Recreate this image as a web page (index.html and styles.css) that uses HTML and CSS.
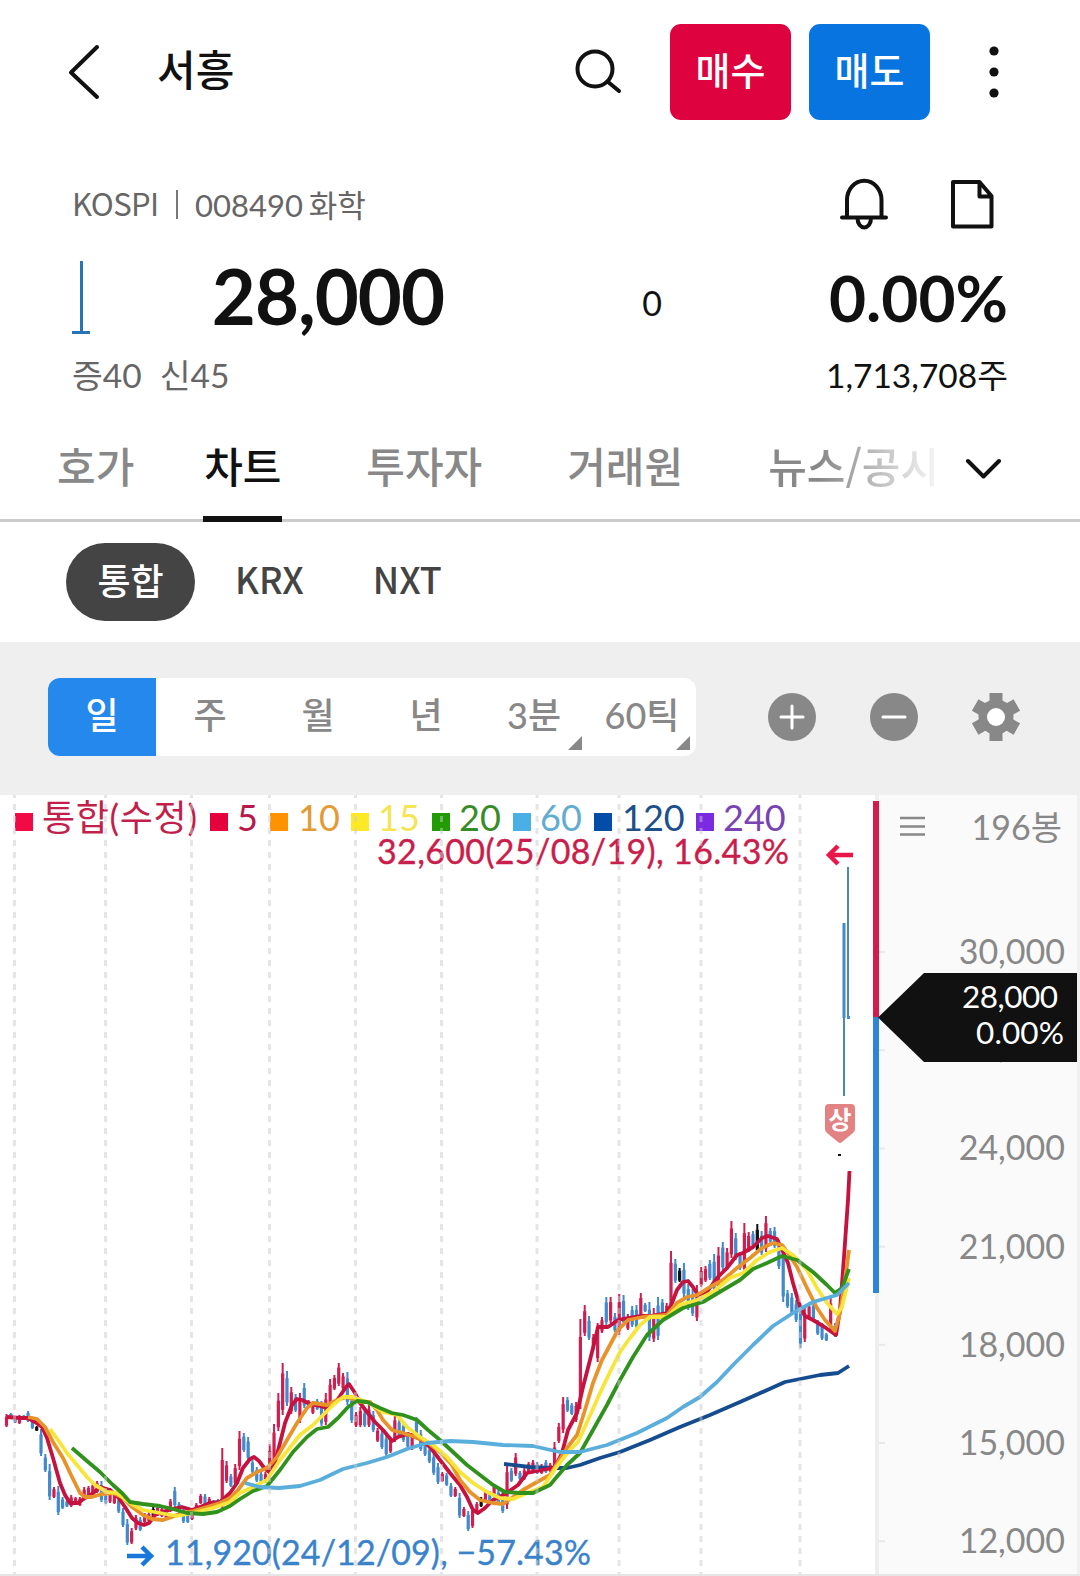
FILE: index.html
```html
<!DOCTYPE html>
<html lang="ko">
<head>
  <meta charset="UTF-8" />
  <meta name="viewport" content="width=device-width, initial-scale=1.0"/>
  <title>서흥</title>
  <link rel="stylesheet" href="styles.css">
</head>
<body>
  <header class="topbar">
    <svg class="back" width="32" height="56" viewBox="0 0 32 56"><path d="M29 3 3 28.500 29 53"/></svg>
    <h1>서흥</h1>
    <svg class="search" width="48" height="48" viewBox="0 0 48 48"><circle cx="20" cy="21" r="17.500"/><path d="M32.500 33.500 44 43"/></svg>
    <button class="trade buy">매수</button>
    <button class="trade sell">매도</button>
    <svg class="more" width="10" height="56" viewBox="0 0 10 56"><circle cx="5" cy="7" r="4.600"/><circle cx="5" cy="28" r="4.600"/><circle cx="5" cy="49" r="4.600"/></svg>
  </header>

  <section class="info">
    <div class="meta">
      <span class="market">KOSPI</span>
      <span class="sep"></span>
      <span class="code">008490 화학</span>
      <svg class="bell" width="50" height="52" viewBox="0 0 50 52"><path d="M3 39.500H47M8 39V22a17 19 0 0 1 34.500 0V39M18.500 40c0 12.500 13.500 12.500 13.500 0"/></svg>
      <svg class="doc" width="46" height="52" viewBox="0 0 46 52"><path d="M3 4H29.500L41.500 18V48.500H3ZM29.500 4V18.500H41.500"/></svg>
    </div>
    <div class="quote">
      <svg class="mini" width="20" height="76" viewBox="0 0 20 76"><path d="M9.500 1V73M0 72.500H18"/></svg>
      <span class="price">28,000</span>
      <span class="diff">0</span>
      <span class="percent">0.00%</span>
    </div>
    <div class="sub">
      <span class="margin">증40</span>
      <span class="credit">신45</span>
      <span class="volume">1,713,708주</span>
    </div>
  </section>

  <nav class="tabs">
    <a class="tab">호가</a>
    <a class="tab active">차트</a>
    <a class="tab">투자자</a>
    <a class="tab">거래원</a>
    <a class="tab fade">뉴스/공시</a>
    <svg class="expand" width="36" height="24" viewBox="0 0 36 24"><path d="M3 3 18.500 18.500 34 3"/></svg>
  </nav>

  <div class="exchanges">
    <span class="pill">통합</span>
    <span class="krx">KRX</span>
    <span class="nxt">NXT</span>
  </div>

  <div class="toolbar">
    <div class="periods">
      <span class="period on">일</span>
      <span class="period">주</span>
      <span class="period">월</span>
      <span class="period">년</span>
      <span class="period menu">3분</span>
      <span class="period menu">60틱</span>
    </div>
    <div class="tools">
      <svg width="48" height="48" viewBox="0 0 48 48"><circle cx="24" cy="24" r="24"/><path d="M13 24H35M24 13V35"/></svg>
      <svg width="48" height="48" viewBox="0 0 48 48"><circle cx="24" cy="24" r="24"/><path d="M13 24H35"/></svg>
      <svg width="48" height="48" viewBox="0 0 48 48">
        <circle cx="24" cy="24" r="17.500"/>
        <g id="teeth"></g>
        <circle class="hole" cx="24" cy="24" r="9"/>
      </svg>
    </div>
  </div>

  <svg class="chart" width="1080" height="781" viewBox="0 795 1080 781">
    <rect x="877" y="795" width="200" height="781" fill="#fafafa"/>
    <rect x="1077" y="795" width="3" height="781" fill="#f0f0f0"/>
    <rect x="875" y="795" width="4" height="781" fill="#eee"/>
    <g id="ticks"></g>
    <g id="candles"></g>
    <g class="ma">
      <polyline stroke="#154c8f" points="504,1464 530,1467 550,1468 567,1468 580,1465 600,1458 620,1452 650,1440 680,1427 710,1415 740,1402 765,1391 785,1382 800,1379 820,1375 838,1373 849,1366"/>
      <polyline stroke="#c5123f" points="7,1417 20,1418 28,1418 35,1422 42,1427 47,1438 53,1458 60,1483 65,1495 70,1503 78,1503 85,1498 92,1494 100,1487 110,1490 118,1497 125,1507 132,1518 138,1523 144,1525 149,1523 155,1515 163,1512 172,1509 182,1507 192,1510 200,1507 210,1503 220,1502 230,1493 237,1483 243,1468 250,1459 254,1457 259,1461 265,1469 270,1472 275,1462 280,1443 285,1423 292,1405 297,1399 302,1400 310,1404 320,1406 327,1408 335,1403 340,1396 346,1387 349,1384 355,1393 360,1403 367,1412 375,1422 383,1430 392,1441 398,1437 408,1434 420,1439 430,1447 440,1460 450,1473 460,1485 467,1497 473,1510 478,1513 485,1508 493,1500 503,1495 508,1492 518,1485 527,1473 537,1471 547,1469 555,1467 562,1453 568,1430 577,1413 583,1387 590,1360 595,1340 598,1327 608,1327 618,1320 628,1318 640,1316 650,1316 667,1313 672,1303 677,1290 683,1282 688,1281 693,1287 698,1295 707,1292 717,1278 727,1268 737,1255 743,1253 753,1247 762,1238 768,1236 777,1239 783,1252 788,1263 793,1283 800,1307 805,1316 813,1320 823,1326 836,1335 840,1310 844,1257 848,1200 849.500,1171"/>
      <polyline stroke="#e8932a" points="28,1417 37,1419 45,1427 53,1442 63,1458 72,1477 80,1493 85,1497 92,1497 102,1494 113,1493 122,1497 132,1507 143,1515 152,1519 163,1520 172,1517 182,1513 193,1511 207,1507 220,1503 230,1498 238,1490 247,1478 257,1472 267,1468 277,1457 287,1440 297,1423 307,1408 313,1403 327,1405 337,1400 347,1397 360,1402 370,1402 377,1410 383,1420 392,1430 403,1433 415,1437 427,1442 440,1452 452,1465 460,1480 470,1492 480,1500 493,1503 503,1504 513,1497 523,1490 537,1482 550,1475 555,1467 567,1448 577,1435 585,1410 593,1383 602,1360 610,1345 618,1330 628,1320 643,1317 667,1315 677,1303 687,1297 697,1295 710,1287 723,1280 737,1268 750,1258 762,1248 773,1243 782,1245 788,1253 797,1267 807,1288 817,1308 825,1320 835,1331 840,1313 845,1280 849,1250"/>
      <polyline stroke="#f8e53a" points="50,1429 58,1440 67,1453 77,1465 87,1477 95,1485 107,1492 117,1493 130,1503 143,1510 160,1513 177,1516 193,1513 213,1508 230,1502 240,1493 253,1487 267,1480 270,1475 280,1460 292,1445 300,1435 313,1425 323,1415 333,1405 343,1397 353,1397 367,1402 383,1412 397,1415 407,1427 420,1437 433,1445 447,1457 460,1472 473,1483 487,1492 500,1498 513,1499 527,1493 543,1487 555,1469 568,1452 578,1442 588,1420 600,1393 610,1372 620,1352 630,1338 640,1325 650,1317 667,1317 680,1305 697,1300 713,1292 730,1278 743,1273 757,1260 770,1252 782,1248 793,1255 807,1270 817,1288 827,1303 837,1314 842,1307 849,1278"/>
      <polyline stroke="#30921d" points="72,1448 87,1461 100,1472 113,1485 122,1493 130,1502 143,1504 160,1506 173,1509 187,1513 203,1514 217,1512 230,1506 240,1499 253,1491 267,1486 280,1470 293,1452 307,1437 317,1429 328,1427 338,1418 348,1407 357,1401 367,1402 380,1408 392,1413 403,1415 417,1420 428,1430 440,1440 453,1452 467,1465 480,1475 493,1485 505,1492 520,1493 533,1493 550,1485 555,1479 567,1465 580,1453 593,1430 607,1405 620,1380 633,1357 647,1335 663,1320 683,1308 703,1302 723,1290 740,1280 753,1269 767,1263 782,1256 797,1260 813,1272 827,1285 835,1293 842,1288 849,1269"/>
      <polyline stroke="#5aaedb" points="245,1483 260,1487 279,1488 300,1486 320,1480 343,1469 367,1463 387,1457 407,1449 427,1443 450,1441 473,1442 503,1445 533,1446 555,1451 560,1452 580,1452 607,1445 637,1433 667,1418 683,1407 700,1397 717,1382 733,1365 753,1345 773,1326 793,1313 813,1302 837,1295 849,1283"/>
    </g>

    <g class="legend">
      <rect x="15" y="813" width="18" height="18" fill="#f10a45"/><text x="42" y="831" textLength="155" fill="#c21f4b">통합(수정)</text>
      <rect x="210" y="813" width="18" height="18" fill="#e6003c"/><text x="237" y="831" fill="#b8194a">5</text>
      <rect x="270" y="813" width="18" height="18" fill="#ff9200"/><text x="298" y="831" fill="#e39a35">10</text>
      <rect x="351" y="813" width="18" height="18" fill="#ffe924"/><text x="378" y="831" fill="#f4e554">15</text>
      <rect x="432" y="813" width="18" height="18" fill="#229b05"/><text x="459" y="831" fill="#378c27">20</text>
      <rect x="513" y="813" width="18" height="18" fill="#49afe4"/><text x="540" y="831" fill="#62acd2">60</text>
      <rect x="594" y="813" width="18" height="18" fill="#034da9"/><text x="622" y="831" fill="#1d4f8b">120</text>
      <rect x="696" y="813" width="18" height="18" fill="#7b2ce0"/><text x="723" y="831" fill="#7944b2">240</text>
    </g>
    <text class="peak high" x="377" y="864" textLength="412">32,600(25/08/19), 16.43%</text>
    <text class="peak low" x="165" y="1565" textLength="426">11,920(24/12/09), −57.43%</text>
    <path class="arrow" stroke="#e9164a" d="M853 855H829M838 846 829 855 838 864"/>
    <path class="arrow" stroke="#1877dc" d="M127 1556H151M142 1547 151 1556 142 1565"/>
    <g id="grid"></g>

    <path fill="#e28282" d="M829 1104H851Q855 1104 855 1108V1129Q855 1131 853 1133L842 1142Q840 1144 838 1142L827 1133Q825 1131 825 1129V1108Q825 1104 829 1104Z"/>
    <text class="limit" x="840" y="1129">상</text>

    <rect x="873" y="801" width="6" height="216" fill="#d51a4c"/>
    <rect x="873" y="1017" width="6" height="276" fill="#2e84d6"/>
    <path stroke="#888" stroke-width="2.500" d="M900 818H925M900 826.500H925M900 834.500H925"/>
    <text class="count" x="1062" y="840">196봉</text>
    <g id="prices"></g>
    <path fill="#111" d="M878 1017.500 924 973H1077V1062H924Z"/>
    <text class="now" x="962" y="1008" textLength="96">28,000</text>
    <text class="now" x="976" y="1044" textLength="88">0.00%</text>
    <rect x="0" y="1574" width="1080" height="2" fill="#e6e6e6"/>
  </svg>

  <script src="chart.js"></script>
</body>
</html>
```

FILE: styles.css
```css
* {
  box-sizing: border-box;
}

body {
  margin: 0;
  width: 1080px;
  background: #fff;
  color: #111;
  font-family: Lato, "Noto Sans CJK KR", sans-serif;
}

svg {
  display: block;
  flex: none;
}

.back, .search, .bell, .doc, .mini, .expand {
  fill: none;
  stroke: #111;
  stroke-width: 4;
  stroke-linecap: round;
  stroke-linejoin: round;
}

.topbar {
  display: flex;
  align-items: center;
  height: 144px;
  padding-left: 68px;
}

h1 {
  width: 418px;
  margin: 0 0 4px 57px;
  font-size: 42px;
  font-weight: 500;
  line-height: 60px;
}

.search {
  margin-right: 47px;
}

.trade {
  width: 121px;
  height: 96px;
  margin-right: 18px;
  padding: 0 0 8px;
  border: none;
  border-radius: 11px;
  color: #fff;
  font: 500 38px "Noto Sans CJK KR", sans-serif;
}

.buy {
  background: #de023e;
}

.sell {
  background: #0874e0;
}

.more {
  margin-left: 41px;
  fill: #111;
}

.info {
  height: 276px;
}

.meta {
  display: flex;
  align-items: center;
  height: 120px;
  padding-left: 72px;
  color: #666;
  font-size: 31px;
}

.market {
  width: 104px;
  margin-bottom: 3px;
  font-family: "Noto Sans CJK KR", sans-serif;
  letter-spacing: -0.6px;
}

.sep {
  width: 2px;
  height: 29px;
  background: #777;
}

.code {
  width: 644px;
  margin: 0 0 2px 17px;
  word-spacing: -2px;
}

.doc {
  margin-left: 61px;
}

.quote {
  display: flex;
  align-items: center;
  height: 72px;
  margin-top: -2px;
}

.mini {
  margin-left: 72px;
  stroke: #2b73b8;
  stroke-width: 3;
  stroke-linecap: butt;
}

.price {
  width: 352px;
  margin-bottom: 5px;
  text-align: right;
  font-size: 76px;
  font-weight: 700;
  letter-spacing: -1px;
}

.diff {
  width: 218px;
  margin-top: 9px;
  text-align: right;
  font-size: 34px;
}

.percent {
  width: 346px;
  margin-bottom: 2px;
  text-align: right;
  font-size: 64px;
  font-weight: 700;
}

.sub {
  display: flex;
  align-items: center;
  height: 78px;
  padding: 0 72px;
  font-size: 33.5px;
}

.margin, .credit {
  color: #666;
}

.credit {
  margin-left: 18px;
}

.volume {
  margin-left: auto;
}

.tabs {
  display: flex;
  align-items: center;
  height: 102px;
  padding-left: 57px;
  border-bottom: 3px solid #ccc;
  font-family: "Noto Sans CJK KR", sans-serif;
  font-size: 42px;
  font-weight: 500;
}

.tab {
  height: 99px;
  line-height: 89px;
  margin-right: 85px;
  color: #888;
  white-space: nowrap;
}

.tab:first-child {
  margin-right: 69px;
}

.active {
  width: 79px;
  height: 102px;
  margin: 0 84px -3px 0;
  border-bottom: 6px solid #111;
  color: #111;
  text-align: center;
}

.fade {
  margin-right: 26px;
  background: linear-gradient(90deg, #888 30%, #fff 105%);
  background-clip: text;
  color: transparent;
}

.exchanges {
  display: flex;
  align-items: center;
  height: 120px;
  padding-left: 66px;
  color: #444;
  font-family: "Noto Sans CJK KR", sans-serif;
  font-size: 36px;
  font-weight: 500;
}

.pill {
  width: 129px;
  height: 78px;
  border-radius: 39px;
  background: #444;
  color: #fff;
  line-height: 73px;
  text-align: center;
}

.krx {
  margin: 0 69px 8px 40px;
}

.nxt {
  margin-bottom: 8px;
}

.toolbar {
  display: flex;
  align-items: center;
  height: 153px;
  padding: 0 0 3px 48px;
  background: #efefef;
}

.periods {
  display: flex;
  width: 648px;
  height: 78px;
  border-radius: 12px;
  overflow: hidden;
  background: #fff;
}

.period {
  position: relative;
  width: 108px;
  color: #888;
  font-size: 36px;
  font-weight: 500;
  line-height: 74px;
  text-align: center;
}

.period.on {
  background: #2488ed;
  color: #fff;
}

.menu::after {
  content: "";
  position: absolute;
  right: 6px;
  bottom: 6px;
  border-left: 14px solid transparent;
  border-bottom: 14px solid #888;
}

.tools {
  display: flex;
  gap: 54px;
  margin-left: 72px;
  fill: #888;
}

.tools path {
  stroke: #fff;
  stroke-width: 3;
  stroke-linecap: round;
}

.hole {
  fill: #fff;
}

.ma polyline {
  fill: none;
  stroke-width: 3.8;
  stroke-linejoin: round;
}

.legend text {
  font-size: 36px;
}

.peak {
  font-size: 34px;
  stroke-width: 0.35;
}

.high {
  fill: #c91e4b;
  stroke: #c91e4b;
}

.low {
  fill: #3a83cb;
  stroke: #3a83cb;
}

.arrow {
  fill: none;
  stroke-width: 4.5;
}

.limit {
  fill: #fff;
  font-size: 25px;
  font-weight: 700;
  text-anchor: middle;
}

.count, .axis {
  fill: #888;
  font-size: 34px;
  text-anchor: end;
}

.now {
  fill: #fff;
  font-size: 31.5px;
}
```

FILE: chart.js
```js
const NS = "http://www.w3.org/2000/svg";
const colors = { r: "#ce1f50", b: "#4389cc", k: "#111" };

// colour, high, low (one entry per bar)
const bars = `r1414-1427 b1413-1418 b1417-1423 r1415-1424 b1415-1420 b1411-1422 b1417-1429 k1426-1431
b1429-1456 b1454-1472 b1464-1500 r1487-1498 b1486-1515 b1497-1509 b1500-1507 r1495-1507 r1497-1504
r1497-1506 r1487-1500 r1486-1496 r1483-1495 r1481-1493 b1481-1502 b1494-1504 r1488-1503 r1493-1504
b1497-1513 b1508-1527 b1519-1545 r1528-1544 r1515-1530 b1517-1531 r1513-1523 r1512-1522 k1507-1517
r1506-1516 r1507-1517 r1508-1519 r1499-1512 b1487-1507 b1502-1513 b1507-1523 b1511-1523 r1510-1520
r1503-1512 r1494-1504 b1494-1507 r1497-1507 b1500-1506 b1499-1507 r1448-1508 r1461-1483 b1474-1487
r1464-1485 r1431-1470 b1433-1452 b1437-1460 b1460-1473 b1467-1482 b1472-1483 r1472-1483 r1444-1479
r1424-1467 r1393-1431 r1363-1415 b1371-1406 r1387-1414 b1394-1412 r1393-1423 b1383-1408 r1400-1408
r1401-1414 b1399-1410 b1401-1426 r1393-1425 r1379-1408 r1375-1390 r1363-1386 r1373-1390 b1372-1405
b1395-1423 r1412-1427 r1407-1427 b1410-1427 r1405-1427 b1411-1432 r1428-1442 b1430-1449 b1435-1456
r1437-1453 r1415-1442 b1419-1437 b1422-1442 b1432-1448 r1433-1450 b1417-1438 b1430-1451 b1440-1456
b1447-1463 b1453-1475 b1463-1484 r1472-1482 b1473-1486 b1483-1497 r1487-1497 b1493-1518 r1507-1517
b1511-1531 r1507-1528 r1502-1512 k1497-1507 r1490-1502 b1491-1503 r1484-1497 b1490-1503 b1492-1513
r1463-1509 b1468-1482 r1453-1476 b1471-1480 r1468-1480 r1462-1473 r1460-1473 b1462-1474 r1464-1474
b1460-1473 r1463-1472 r1442-1470 r1423-1443 r1397-1433 b1397-1412 b1403-1415 r1402-1422 r1319-1409
r1305-1336 b1316-1340 r1334-1350 r1323-1362 r1317-1333 b1297-1325 r1297-1323 b1313-1332 r1294-1335
b1295-1325 r1314-1330 b1306-1327 b1305-1329 r1293-1318 b1303-1312 b1302-1341 r1308-1342 b1297-1340
b1299-1317 r1303-1317 r1251-1310 b1259-1283 k1268-1282 b1263-1297 b1284-1310 b1289-1316 r1285-1321
r1267-1287 r1266-1282 b1260-1280 b1254-1293 r1247-1290 b1242-1270 r1248-1270 r1221-1258 b1233-1260
b1252-1270 r1223-1274 r1232-1252 b1231-1247 k1224-1253 b1231-1255 r1216-1252 b1228-1243 b1227-1248
b1240-1269 b1247-1302 b1290-1308 b1293-1315 b1300-1322 b1303-1348 r1307-1342 r1303-1320 b1302-1320
b1320-1335 b1323-1340 b1333-1341 r1297-1330 b1323-1337`.split(/\s+/);

function add(parent, tag, attrs, text) {
  const el = document.createElementNS(NS, tag);
  for (const key in attrs) el.setAttribute(key, attrs[key]);
  if (text) el.textContent = text;
  document.getElementById(parent).appendChild(el);
}

function bar(x, top, bottom, width, fill) {
  add("candles", "rect", { x: x - width / 2, y: top, width: width, height: bottom - top, fill: fill });
}

bars.forEach((b, i) => {
  const [high, low] = b.slice(1).split("-").map(Number);
  const x = 6.5 + i * 4.315;
  const size = low - high;
  bar(x, high, low, 2, colors[b[0]]);
  bar(x, high + size * 0.2, low - size * 0.1, 3.2, colors[b[0]]);
});
bar(839.5, 1154, 1156, 3, "#111");
bar(844, 923, 1018, 3, "#4389cc");
bar(844, 1018, 1096, 2, "#4b89b4");
bar(848, 867, 1018, 2, "#4b89b4");
bar(848.5, 1016, 1019, 3, "#4389cc");

[14.5, 105.5, 191.5, 269.5, 355.5, 441.5, 537, 619, 701, 800].forEach(x => {
  add("grid", "path", { d: `M${x} 792V1576`, stroke: "#ccc", "stroke-opacity": 0.5, "stroke-width": 3, "stroke-dasharray": "6 6" });
});

["30,000", "27,000", "24,000", "21,000", "18,000", "15,000", "12,000"].forEach((price, i) => {
  const y = 952 + i * 98.2;
  add("ticks", "rect", { x: 879, y: y - 1, width: 6, height: 2, fill: "#e8e8e8" });
  // 27,000 sits under the current price flag
  add("prices", "text", { x: 1065, y: y + (i === 1 ? 8 : 12), class: "axis" }, price);
});

for (let i = 0; i < 6; i++) {
  add("teeth", "path", { d: "M17.5 0H30.500V12H17.500Z", transform: `rotate(${i * 60} 24 24)`, style: "stroke:none" });
}
```
